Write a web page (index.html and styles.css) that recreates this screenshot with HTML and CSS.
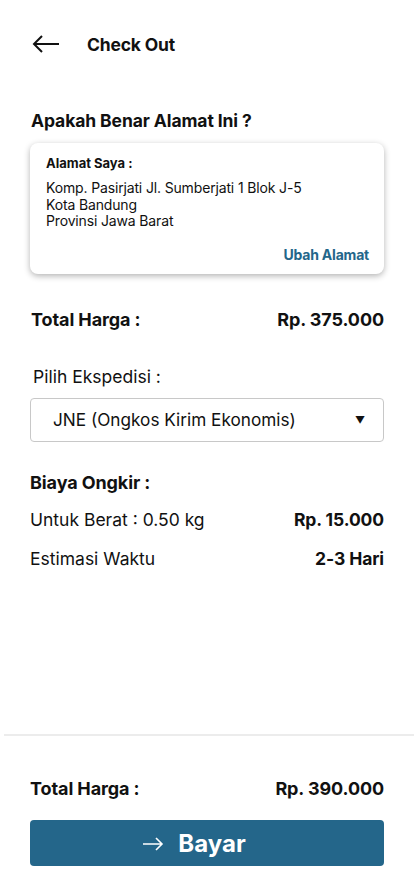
FILE: index.html
```html
<!DOCTYPE html>
<html>
<head>
<meta charset="utf-8">
<link rel="stylesheet" href="styles.css">
</head>
<body>
<div class="page">
  <header class="topbar">
    <svg class="back" width="28" height="18" viewBox="0 0 28 18"><path d="M27 9H2M10 1L2 9l8 8" fill="none" stroke="#111" stroke-width="2"/></svg>
    <h1 class="title">Check Out</h1>
  </header>
  <main class="content">
    <h2 class="section-title">Apakah Benar Alamat Ini ?</h2>
    <div class="card">
      <div class="card-label">Alamat Saya :</div>
      <div class="address">Komp. Pasirjati Jl. Sumberjati 1 Blok J-5<br>Kota Bandung<br>Provinsi Jawa Barat</div>
      <div class="card-action">Ubah Alamat</div>
    </div>
    <div class="row bold total1"><span>Total Harga :</span><span>Rp. 375.000</span></div>
    <div class="label">Pilih Ekspedisi :</div>
    <div class="select"><span>JNE (Ongkos Kirim Ekonomis)</span><span class="caret">▼</span></div>
    <div class="sub-title">Biaya Ongkir :</div>
    <div class="row weight"><span>Untuk Berat : 0.50 kg</span><span class="b">Rp. 15.000</span></div>
    <div class="row eta"><span>Estimasi Waktu</span><span class="b">2-3 Hari</span></div>
  </main>
  <footer class="footer">
    <div class="row bold"><span>Total Harga :</span><span>Rp. 390.000</span></div>
    <button class="pay"><svg width="22" height="14" viewBox="0 0 22 14"><path d="M1 7h19M14 1l6 6-6 6" fill="none" stroke="#fff" stroke-width="1.6"/></svg><span>Bayar</span></button>
  </footer>
</div>
</body>
</html>
```
FILE: styles.css
```css
* { box-sizing: border-box; }
html, body { margin: 0; padding: 0; background: #fff; }
body { font-family: "Inter", "Roboto", sans-serif; color: #111; }
.page { width: 414px; height: 896px; display: flex; flex-direction: column; }
.topbar { display: flex; align-items: center; height: 30px; margin-top: 29px; padding-left: 32px; }
.back { margin-right: 27px; }
.title { font-size: 17.5px; font-weight: 700; margin: 0; letter-spacing: -0.2px; }
.content { padding: 0 30px; flex: 1; }
.section-title { font-size: 17.5px; font-weight: 700; margin: 51px 0 0 1px; line-height: 22px; letter-spacing: -0.1px; }
.card { margin-top: 11px; border-radius: 8px; box-shadow: 0 2px 6px rgba(0,0,0,0.3); padding: 12px 15px 10px 16px; }
.card-label { font-size: 13px; font-weight: 700; line-height: 16px; }
.address { font-size: 14px; line-height: 16.5px; margin-top: 9px; letter-spacing: -0.15px; }
.card-action { text-align: right; color: #23668a; font-weight: 700; font-size: 14px; margin-top: 16px; line-height: 18px; letter-spacing: -0.2px; }
.row { display: flex; justify-content: space-between; align-items: center; font-size: 17.5px; line-height: 22px; }
.row.bold { font-weight: 700; font-size: 18px; letter-spacing: -0.1px; }
.row .b { font-weight: 700; letter-spacing: -0.1px; }
.total1 { margin-top: 35px; padding-left: 1px; }
.label { font-size: 17.5px; margin-top: 35px; padding-left: 3px; line-height: 22px; }
.select { margin-top: 10px; height: 44px; border: 1px solid #c8c8c8; border-radius: 4px; display: flex; align-items: center; justify-content: space-between; padding: 0 18px 0 22px; font-size: 17.2px; }
.caret { font-size: 10px; }
.sub-title { font-size: 18px; font-weight: 700; margin-top: 30px; line-height: 22px; letter-spacing: -0.1px; }
.weight { margin-top: 15px; }
.eta { margin-top: 17px; }
.footer { border-top: 2px solid #ececec; margin: 0 0 0 4px; padding: 42px 30px 30px 26px; }
.pay { margin-top: 20px; width: 100%; height: 46px; border: none; border-radius: 4px; background: #24668a; color: #fff; display: flex; align-items: center; justify-content: center; gap: 14px; padding: 0 26px 0 0; font-family: inherit; font-size: 24px; font-weight: 700; }
.pay svg { margin-top: 1px; }
```
